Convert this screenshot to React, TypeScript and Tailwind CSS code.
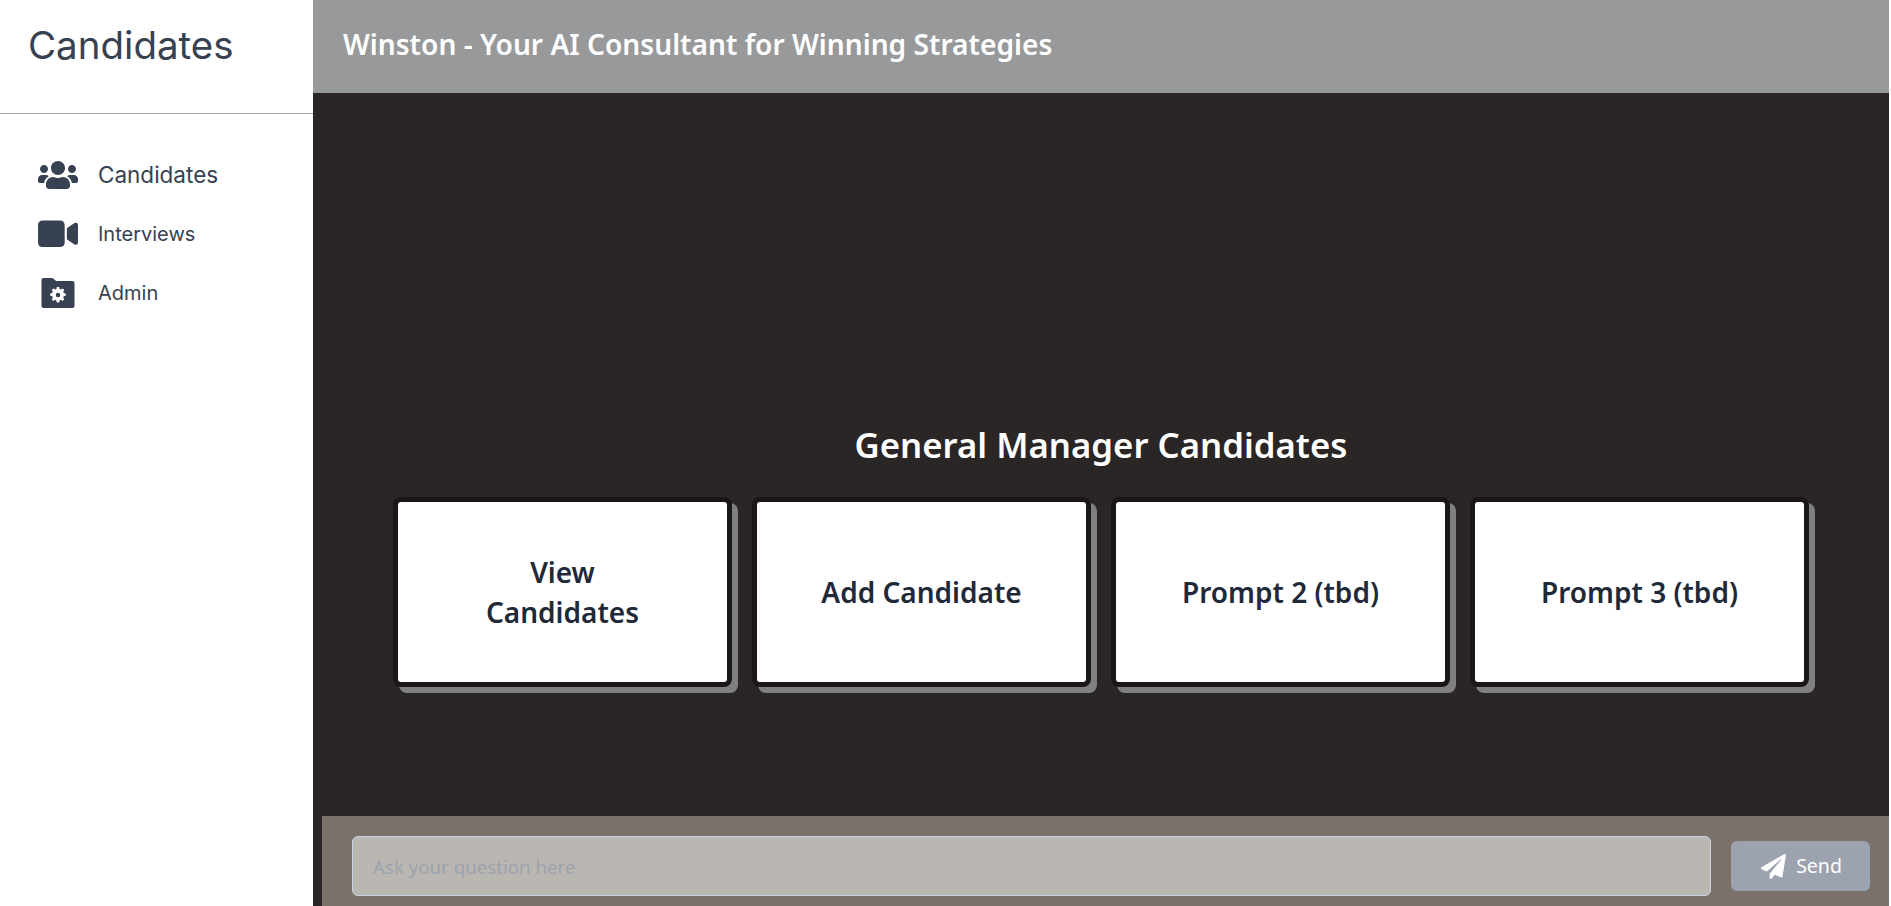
import { FaUsers, FaPaperPlane } from "react-icons/fa";
import { FaVideo } from "react-icons/fa6";

const inter = "font-['Inter',sans-serif]";
const seg = "font-['Noto_Sans',sans-serif]";

function FolderGear() {
  return (
    <svg viewBox="1 0 33 30" className="w-[34px] h-[30px]" fill="#374151">
      <path fillRule="evenodd" d="M1 2C1 .9 1.900 0 3 0h8.200c.7 0 1.300.3 1.800.7l2.600 2.300H32c1.100 0 2 .9 2 2V28c0 1.100-.9 2-2 2H3c-1.100 0-2-.9-2-2z" />
      <g fill="#ffffff" transform="translate(17.5 17) scale(1.08) translate(-17 -17.5)">
        <path fillRule="evenodd" d="M15.900 10h2.200l.4 1.900c.4.1.8.300 1.100.5l1.700-1 1.500 1.500-1 1.700c.2.300.4.700.5 1.100l1.900.4v2.200l-1.900.4c-.1.400-.3.800-.5 1.100l1 1.700-1.500 1.500-1.700-1c-.3.200-.7.400-1.100.5l-.4 1.900h-2.200l-.4-1.900c-.4-.1-.8-.3-1.100-.5l-1.700 1-1.500-1.500 1-1.700c-.2-.3-.4-.7-.5-1.100l-1.900-.4v-2.200l1.900-.4c.1-.4.3-.8.500-1.100l-1-1.700 1.500-1.500 1.700 1c.3-.2.7-.4 1.100-.5zM17 15.400a2.100 2.100 0 1 0 0 4.200 2.100 2.100 0 0 0 0-4.200z" />
      </g>
    </svg>
  );
}

function NavItem({ icon, label, size }: { icon: React.ReactNode; label: string; size: string }) {
  return (
    <div className="flex items-center h-[59px] pl-[38px]">
      <div className="w-[40px] flex justify-center">{icon}</div>
      <span className={`ml-[20px] text-[#374151] ${size}`}>{label}</span>
    </div>
  );
}

function Card({ children }: { children: React.ReactNode }) {
  return (
    <button className={`flex-1 h-[190px] bg-white border-[5px] border-[#1a1716] rounded-[8px] shadow-[6px_6px_0_#808080] text-[#1f2937] text-[28px] leading-[40px] font-semibold px-6 ${seg}`}>
      {children}
    </button>
  );
}

export default function App() {
  return (
    <div className={`flex h-[906px] w-[1891px] overflow-hidden bg-white ${inter}`}>
      <aside className="w-[313px] shrink-0 bg-white">
        <div className="h-[114px] border-b border-[#a5a5ad] pl-[28px] pt-[20px]">
          <h1 className="text-[38.500px] leading-[50px] text-[#374151]">Candidates</h1>
        </div>
        <nav className="pt-[31px] flex flex-col">
          <NavItem icon={<FaUsers className="w-[40px] h-[32px] text-[#374151]" />} label="Candidates" size="text-[22.500px]" />
          <NavItem icon={<FaVideo className="w-[40px] h-[35.500px] text-[#374151]" />} label="Interviews" size="text-[20px]" />
          <NavItem icon={<FolderGear />} label="Admin" size="text-[20px]" />
        </nav>
      </aside>
      <main className="w-[1576px] shrink-0 flex flex-col bg-[#2a2625]">
        <header className="h-[93px] bg-[#98999b] flex items-center pl-[30px] pb-[4px]">
          <span className={`text-white text-[28.150px] font-semibold ${seg}`}>Winston - Your AI Consultant for Winning Strategies</span>
        </header>
        <div className="flex-1 flex flex-col justify-end items-center pb-[129px]">
          <h2 className={`text-white text-[34.750px] leading-[48px] font-semibold mb-[28px] ${seg}`}>General Manager Candidates</h2>
          <div className="flex gap-[20px] w-[1416px]">
            <Card><span className="block">View</span><span className="block">Candidates</span></Card>
            <Card>Add Candidate</Card>
            <Card>Prompt 2 (tbd)</Card>
            <Card>Prompt 3 (tbd)</Card>
          </div>
        </div>
        <div className="h-[90px] ml-[9px] bg-[#7a716a] flex items-center pt-[10px] pl-[30px] pr-[19px] gap-[20px]">
          <div className={`flex-1 h-[60px] rounded-[6px] border border-[#cbd5e1] bg-[#bab6b2] flex items-center px-[20px] pt-[2px] text-[18.700px] text-[#9ca3af] ${seg}`}>Ask your question here</div>
          <button className={`w-[139px] h-[50px] rounded-[6px] bg-[#9ca3af] flex items-center justify-center gap-[10px] pl-[2px] text-white text-[19.500px] ${seg}`}>
            <FaPaperPlane className="w-[25px] h-[25px]" />
            Send
          </button>
        </div>
      </main>
    </div>
  );
}
